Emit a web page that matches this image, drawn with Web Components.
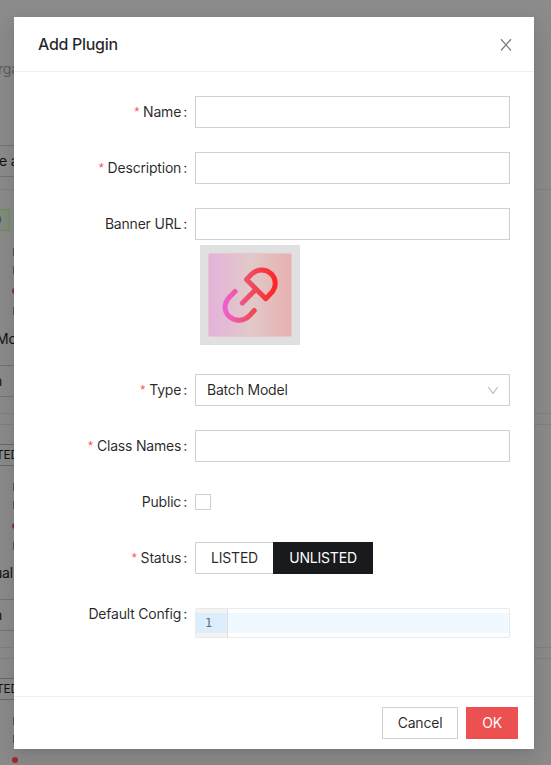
<!DOCTYPE html>
<html lang="en">
<head>
<meta charset="utf-8">
<title>Add Plugin</title>
<style>
html,body{margin:0;height:100%;overflow:hidden}
body{font:14px/22px Inter,"Liberation Sans",sans-serif;letter-spacing:-.2px;color:rgba(0,0,0,.85);background:#8c8c8c;display:grid}
page-backdrop,plugin-modal{grid-area:1/1}
</style>
</head>
<body>
<page-backdrop>
  <backdrop-card tag="D" active name="Mo"></backdrop-card>
  <backdrop-card tag="TED" name="ual"></backdrop-card>
  <backdrop-card tag="TED" name="ual"></backdrop-card>
</page-backdrop>
<plugin-modal heading="Add Plugin">
  <form-row label="Name" required><text-box></text-box></form-row>
  <form-row label="Description" required><text-box></text-box></form-row>
  <form-row label="Banner URL"><text-box></text-box><plugin-banner></plugin-banner></form-row>
  <form-row label="Type" required><text-box arrow>Batch Model</text-box></form-row>
  <form-row label="Class Names" required><text-box></text-box></form-row>
  <form-row label="Public"><check-box></check-box></form-row>
  <form-row label="Status" required><radio-group></radio-group></form-row>
  <form-row label="Default Config"><code-editor></code-editor></form-row>
  <push-button slot="footer">Cancel</push-button>
  <push-button slot="footer" primary>OK</push-button>
</plugin-modal>
<script>
const define = (name, render) => customElements.define(name, class extends HTMLElement {
  connectedCallback() {
    if (!this.shadowRoot) this.attachShadow({mode: 'open'}).innerHTML = render(this);
  }
});

define('page-backdrop', () => `<style>
:host{display:flex;flex-direction:column;height:765px;overflow:hidden;color:#141414}
.org{flex:none;height:22px;margin:58px 0 0 -2px;color:#5c5c5c;width:60px}
.btn{flex:none;box-sizing:border-box;height:32px;margin-top:65px;border:solid #747474;border-width:1px 0;line-height:30px;width:40px;white-space:nowrap}
.btn span{margin-left:-1px}
.cards{display:flex;flex-direction:column;gap:10px;margin-top:12px}
</style><div class="org">rga</div><div class="btn"><span>e a</span></div><div class="cards"><slot></slot></div>`);

define('backdrop-card', el => {
  const active = el.hasAttribute('active');
  return `<style>
:host{display:block;box-sizing:border-box;height:${active ? 225 : 224}px;flex:none;border:solid #818181;border-width:1px 0;padding-top:19px}
.tag{box-sizing:border-box;height:22px;width:40px;border:solid #6c6c6c;border-width:1px 0;font-size:12px;line-height:20px;white-space:nowrap}
.tag span{display:block;margin-left:-4px}
.tag.active{width:10px;border:1px solid #659a4e;border-left:0;color:#1f6a0b;background:#868c83}
.tag.active span{margin-left:-7px}
.bits{display:flex;flex-direction:column;padding:17px 0 0 13px;width:1px}
i{display:block;height:8px;width:1px;background:#555;margin-bottom:10px}
b{display:block;width:6px;height:6px;border-radius:50%;background:#a12b2f;margin:4px 0 13px -1px}
p{margin:${active ? 3 : 2}px 0 0 ${active ? -4 : -6}px}
.btn{box-sizing:border-box;width:40px;height:32px;margin-top:15px;border:solid #747474;border-width:1px 0;line-height:30px}
.btn span{display:block;margin-left:-6px}
</style><div class="tag ${active ? 'active' : ''}"><span>${el.getAttribute('tag')}</span></div>
<div class="bits"><i></i><i></i><b></b><i></i></div><p>${el.getAttribute('name')}</p><div class="btn"><span>n</span></div>`;
});

define('plugin-modal', el => `<style>
:host{display:flex;flex-direction:column;box-sizing:border-box;width:520px;height:732px;margin:17px 0 0 14px;background:#fff;box-shadow:0 3px 6px -4px rgba(0,0,0,.12),0 6px 16px 0 rgba(0,0,0,.08),0 9px 28px 8px rgba(0,0,0,.05);position:relative}
header{display:flex;justify-content:space-between;align-items:center;height:54px;border-bottom:1px solid #f0f0f0;padding:0 22px 0 24px;font-size:16px;font-weight:500;letter-spacing:-.3px}
main{flex:1;padding:24px 24px 0}
footer{display:flex;justify-content:flex-end;gap:8px;padding:10px 16px;border-top:1px solid #f0f0f0}
svg{display:block;margin-top:2px}
</style><header><span>${el.getAttribute('heading')}</span><svg width="12" height="14" viewBox="0 0 12 14" fill="none" stroke="#808080" stroke-width="1.3"><path d="M1 1.2 11 12.5M11 1.2 1 12.5"/></svg></header><main><slot></slot></main><footer><slot name="footer"></slot></footer>`);

define('form-row', el => `<style>
:host{display:grid;grid-template-columns:157px 315px;margin-bottom:24px;align-items:start}
label{display:flex;justify-content:flex-end;align-items:center;height:32px;white-space:nowrap}
label::after{content:":";margin:0 8px 0 2px}
em{font:13px/14px "Liberation Sans",sans-serif;color:#ff4d4f;margin-right:4px}
.control{min-height:32px}
</style><label>${el.hasAttribute('required')?'<em>*</em>':''}${el.getAttribute('label')}</label><div class="control"><slot></slot></div>`);

define('text-box', el => `<style>
:host{display:flex;align-items:center;justify-content:space-between;box-sizing:border-box;height:32px;border:1px solid #d0d0d0;padding:0 10px 0 11px;background:#fff}
</style><span><slot></slot></span>${el.hasAttribute('arrow')?'<svg width="12" height="12" viewBox="0 0 12 12" fill="none" stroke="#b8b8b8" stroke-width="1.1"><path d="M1.2 3 6 9.3 10.8 3"/></svg>':''}`);

define('plugin-banner', () => `<style>
:host{display:block;width:100px;height:100px;margin:5px 0 5px 5px}
svg{display:block}
</style><svg width="100" height="100" viewBox="0 0 100 100"><defs>
<linearGradient id="tile"><stop stop-color="#e4b2da"/><stop offset=".5" stop-color="#e1c9c9"/><stop offset="1" stop-color="#e8b0b0"/></linearGradient>
<linearGradient id="link" gradientUnits="userSpaceOnUse" x1="23" y1="0" x2="77" y2="0"><stop stop-color="#f060d8"/><stop offset=".5" stop-color="#ed4d62"/><stop offset="1" stop-color="#ff2424"/></linearGradient></defs>
<rect width="100" height="100" fill="#e0e0e0"/>
<rect x="8.5" y="8.5" width="83" height="83" rx="2" fill="url(#tile)" stroke="#e5c6cc"/>
<g fill="none" stroke="url(#link)" stroke-width="5" stroke-linecap="round" stroke-linejoin="round"><path d="M35 46.5 29.8 51.7C23.6 57.9 23.4 66.2 29.3 71.7 35.4 77 44.2 76 49.4 70.8L54.3 65.5"/><path d="M42.3 57.9 56 44.2M46.5 34.5 65.7 53.7 70.5 48.8C76.6 42.7 76.7 34 71 28.7 65 23.2 56.7 23.9 51 29.8Z"/></g></svg>`);

define('check-box', () => `<style>
:host{display:flex;align-items:center;height:32px}
span{box-sizing:border-box;width:16px;height:16px;border:1px solid #d0d0d0}
</style><span></span>`);

define('radio-group', () => `<style>
:host{display:flex;height:32px;line-height:32px;text-align:center}
span{box-sizing:border-box;width:78px;border:1px solid #d0d0d0;border-right:0;line-height:30px;border-radius:2px 0 0 2px}
strong{width:100px;background:#191a1d;color:#fff;font-weight:400}
</style><span>LISTED</span><strong>UNLISTED</strong>`);

define('code-editor', () => `<style>
:host{display:flex;box-sizing:border-box;height:30px;margin-top:10px;border:1px solid #e9e9e9;border-radius:2px;overflow:hidden;font:12px/20px "DejaVu Sans Mono",monospace}
.gutter{width:31px;padding:4px 0;background:#f3f3f3;border-right:1px solid #ddd}
.num{height:20px;background:#dcedfe;color:#6a6c6e;padding-right:15px;text-align:right}
.code{flex:1;padding:4px 0}
.line{height:20px;background:#f0f9ff}
</style><div class="gutter"><div class="num">1</div></div><div class="code"><div class="line"></div></div>`);

define('push-button', el => {
  const primary = el.hasAttribute('primary');
  return `<style>
:host{display:block;box-sizing:border-box;height:32px;width:${primary?52:76}px;text-align:center;line-height:30px;border:1px solid ${primary?'#ed5051':'#d0d0d0'};background:${primary?'#ed5051':'#fff'};color:${primary?'#fff':'rgba(0,0,0,.85)'}}
</style><slot></slot>`;
});
</script>
</body>
</html>
